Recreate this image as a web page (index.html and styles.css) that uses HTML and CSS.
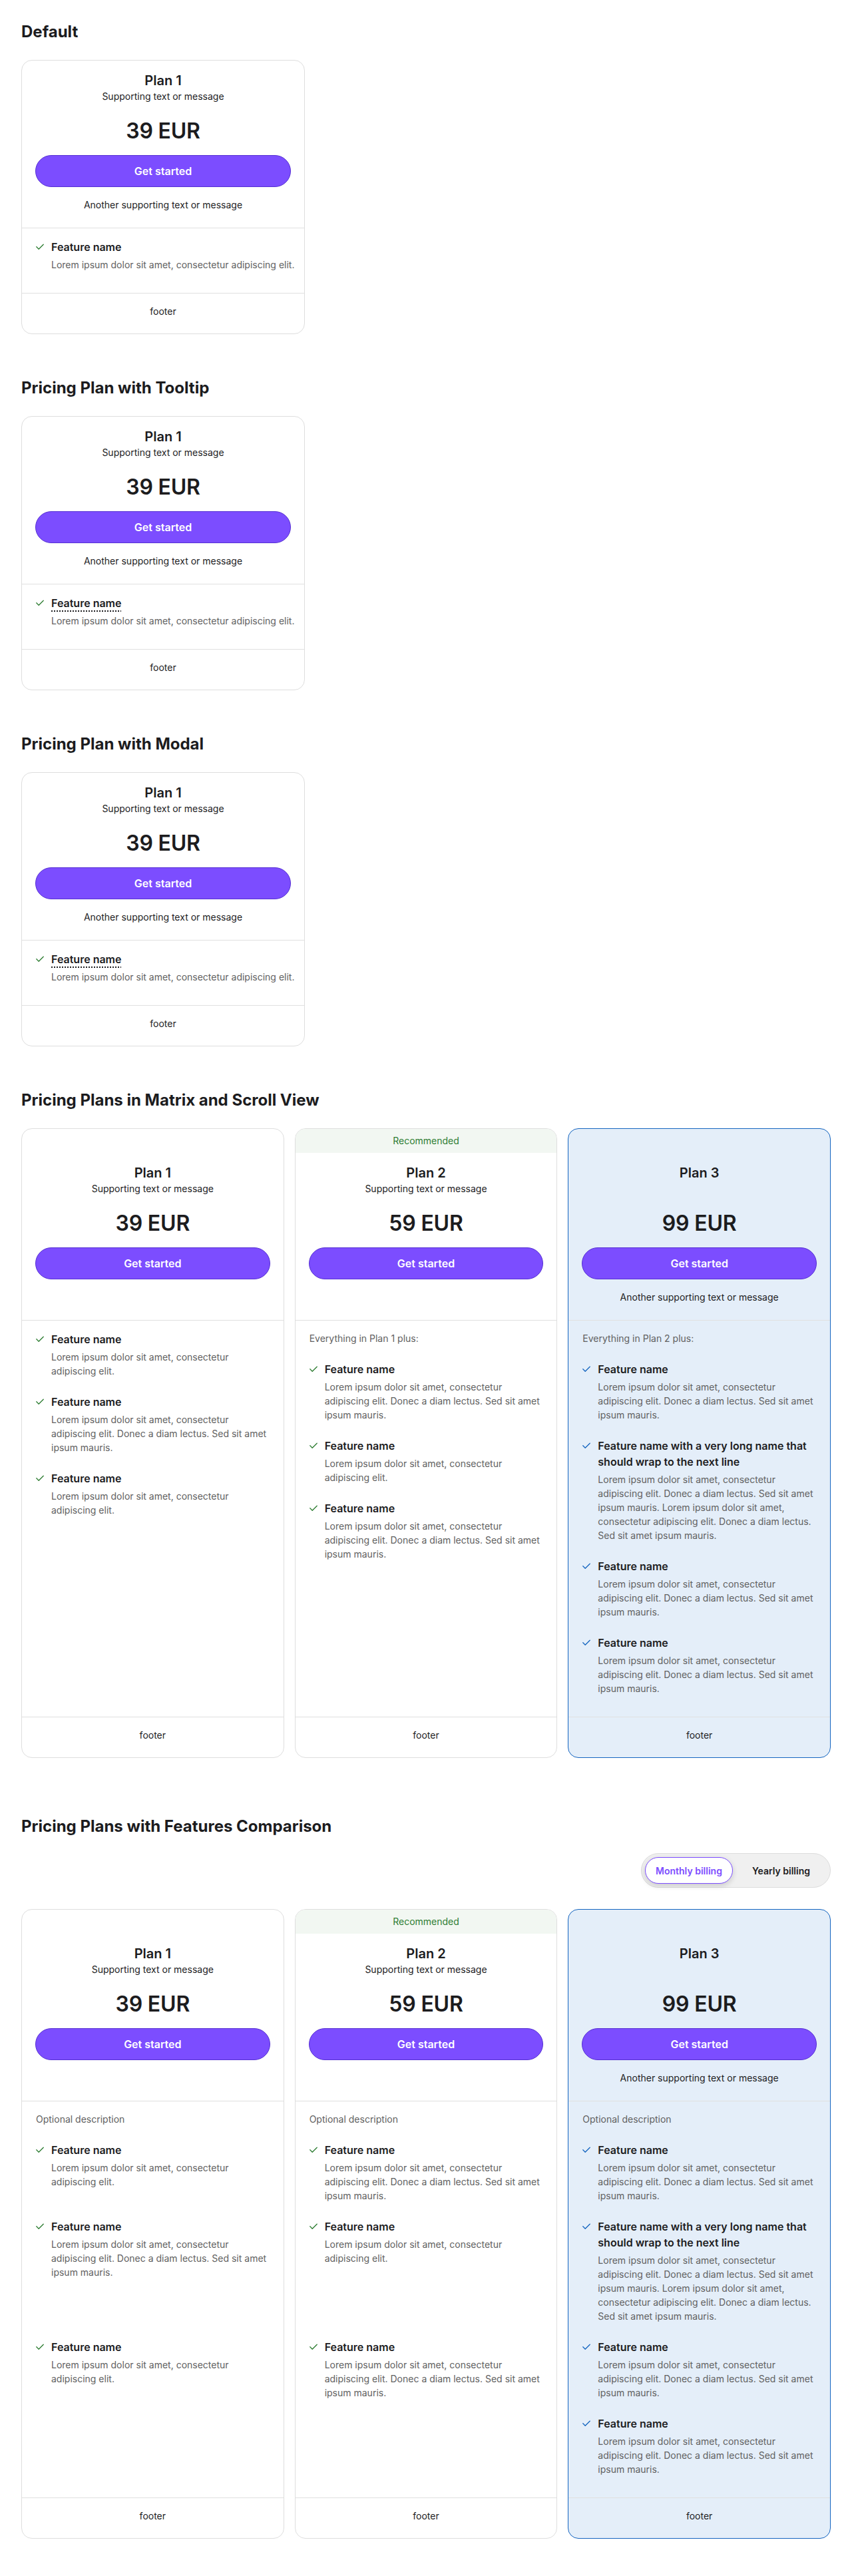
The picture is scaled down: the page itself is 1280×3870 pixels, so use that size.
FILE: index.html
```html
<!DOCTYPE html>
<html lang="en">
<head>
<meta charset="utf-8">
<title>Pricing plans</title>
<link rel="stylesheet" href="styles.css">
</head>
<body>
<main class="page">

  <section class="demo">
    <h2 class="demo-title">Default</h2>
    <article class="plan plan--single">
      <div class="plan-head">
        <h3 class="plan-name">Plan 1</h3>
        <p class="plan-sub">Supporting text or message</p>
        <p class="plan-price">39 EUR</p>
        <button class="plan-cta" type="button">Get started</button>
        <p class="plan-note">Another supporting text or message</p>
      </div>
      <ul class="plan-features">
        <li class="feature">
          <svg class="feature-check" viewBox="0 0 12 10" aria-hidden="true"><path d="M0.8 4.8 L4.2 8.2 L11.2 1.2"/></svg>
          <span class="feature-name">Feature name</span>
          <span class="feature-desc">Lorem ipsum dolor sit amet, consectetur adipiscing elit.</span>
        </li>
      </ul>
      <div class="plan-foot">footer</div>
    </article>
  </section>

  <section class="demo">
    <h2 class="demo-title">Pricing Plan with Tooltip</h2>
    <article class="plan plan--single">
      <div class="plan-head">
        <h3 class="plan-name">Plan 1</h3>
        <p class="plan-sub">Supporting text or message</p>
        <p class="plan-price">39 EUR</p>
        <button class="plan-cta" type="button">Get started</button>
        <p class="plan-note">Another supporting text or message</p>
      </div>
      <ul class="plan-features">
        <li class="feature">
          <svg class="feature-check" viewBox="0 0 12 10" aria-hidden="true"><path d="M0.8 4.8 L4.2 8.2 L11.2 1.2"/></svg>
          <span class="feature-name"><span class="feature-tip">Feature name</span></span>
          <span class="feature-desc">Lorem ipsum dolor sit amet, consectetur adipiscing elit.</span>
        </li>
      </ul>
      <div class="plan-foot">footer</div>
    </article>
  </section>

  <section class="demo">
    <h2 class="demo-title">Pricing Plan with Modal</h2>
    <article class="plan plan--single">
      <div class="plan-head">
        <h3 class="plan-name">Plan 1</h3>
        <p class="plan-sub">Supporting text or message</p>
        <p class="plan-price">39 EUR</p>
        <button class="plan-cta" type="button">Get started</button>
        <p class="plan-note">Another supporting text or message</p>
      </div>
      <ul class="plan-features">
        <li class="feature">
          <svg class="feature-check" viewBox="0 0 12 10" aria-hidden="true"><path d="M0.8 4.8 L4.2 8.2 L11.2 1.2"/></svg>
          <span class="feature-name"><span class="feature-tip">Feature name</span></span>
          <span class="feature-desc">Lorem ipsum dolor sit amet, consectetur adipiscing elit.</span>
        </li>
      </ul>
      <div class="plan-foot">footer</div>
    </article>
  </section>

  <section class="demo">
    <h2 class="demo-title">Pricing Plans in Matrix and Scroll View</h2>
    <div class="plans-grid plans-grid--scroll">
      <article class="plan">
        <div class="plan-band plan-band--empty"></div>
        <div class="plan-head">
          <h3 class="plan-name">Plan 1</h3>
          <p class="plan-sub">Supporting text or message</p>
          <p class="plan-price">39 EUR</p>
          <button class="plan-cta" type="button">Get started</button>
          <div class="plan-note plan-note--empty"></div>
        </div>
        <ul class="plan-features">
          <li class="feature">
            <svg class="feature-check" viewBox="0 0 12 10" aria-hidden="true"><path d="M0.8 4.8 L4.2 8.2 L11.2 1.2"/></svg>
            <span class="feature-name">Feature name</span>
            <span class="feature-desc">Lorem ipsum dolor sit amet, consectetur adipiscing elit.</span>
          </li>
          <li class="feature">
            <svg class="feature-check" viewBox="0 0 12 10" aria-hidden="true"><path d="M0.8 4.8 L4.2 8.2 L11.2 1.2"/></svg>
            <span class="feature-name">Feature name</span>
            <span class="feature-desc">Lorem ipsum dolor sit amet, consectetur adipiscing elit. Donec a diam lectus. Sed sit amet ipsum mauris.</span>
          </li>
          <li class="feature">
            <svg class="feature-check" viewBox="0 0 12 10" aria-hidden="true"><path d="M0.8 4.8 L4.2 8.2 L11.2 1.2"/></svg>
            <span class="feature-name">Feature name</span>
            <span class="feature-desc">Lorem ipsum dolor sit amet, consectetur adipiscing elit.</span>
          </li>
        </ul>
        <div class="plan-foot">footer</div>
      </article>

      <article class="plan">
        <div class="plan-band">Recommended</div>
        <div class="plan-head">
          <h3 class="plan-name">Plan 2</h3>
          <p class="plan-sub">Supporting text or message</p>
          <p class="plan-price">59 EUR</p>
          <button class="plan-cta" type="button">Get started</button>
          <div class="plan-note plan-note--empty"></div>
        </div>
        <ul class="plan-features">
          <li class="features-intro">Everything in Plan 1 plus:</li>
          <li class="feature">
            <svg class="feature-check" viewBox="0 0 12 10" aria-hidden="true"><path d="M0.8 4.8 L4.2 8.2 L11.2 1.2"/></svg>
            <span class="feature-name">Feature name</span>
            <span class="feature-desc">Lorem ipsum dolor sit amet, consectetur adipiscing elit. Donec a diam lectus. Sed sit amet ipsum mauris.</span>
          </li>
          <li class="feature">
            <svg class="feature-check" viewBox="0 0 12 10" aria-hidden="true"><path d="M0.8 4.8 L4.2 8.2 L11.2 1.2"/></svg>
            <span class="feature-name">Feature name</span>
            <span class="feature-desc">Lorem ipsum dolor sit amet, consectetur adipiscing elit.</span>
          </li>
          <li class="feature">
            <svg class="feature-check" viewBox="0 0 12 10" aria-hidden="true"><path d="M0.8 4.8 L4.2 8.2 L11.2 1.2"/></svg>
            <span class="feature-name">Feature name</span>
            <span class="feature-desc">Lorem ipsum dolor sit amet, consectetur adipiscing elit. Donec a diam lectus. Sed sit amet ipsum mauris.</span>
          </li>
        </ul>
        <div class="plan-foot">footer</div>
      </article>

      <article class="plan plan--featured">
        <div class="plan-band plan-band--empty"></div>
        <div class="plan-head">
          <h3 class="plan-name">Plan 3</h3>
          <div class="plan-sub plan-sub--empty"></div>
          <p class="plan-price">99 EUR</p>
          <button class="plan-cta" type="button">Get started</button>
          <p class="plan-note">Another supporting text or message</p>
        </div>
        <ul class="plan-features">
          <li class="features-intro">Everything in Plan 2 plus:</li>
          <li class="feature">
            <svg class="feature-check" viewBox="0 0 12 10" aria-hidden="true"><path d="M0.8 4.8 L4.2 8.2 L11.2 1.2"/></svg>
            <span class="feature-name">Feature name</span>
            <span class="feature-desc">Lorem ipsum dolor sit amet, consectetur adipiscing elit. Donec a diam lectus. Sed sit amet ipsum mauris.</span>
          </li>
          <li class="feature">
            <svg class="feature-check" viewBox="0 0 12 10" aria-hidden="true"><path d="M0.8 4.8 L4.2 8.2 L11.2 1.2"/></svg>
            <span class="feature-name">Feature name with a very long name that should wrap to the next line</span>
            <span class="feature-desc">Lorem ipsum dolor sit amet, consectetur adipiscing elit. Donec a diam lectus. Sed sit amet ipsum mauris. Lorem ipsum dolor sit amet, consectetur adipiscing elit. Donec a diam lectus. Sed sit amet ipsum mauris.</span>
          </li>
          <li class="feature">
            <svg class="feature-check" viewBox="0 0 12 10" aria-hidden="true"><path d="M0.8 4.8 L4.2 8.2 L11.2 1.2"/></svg>
            <span class="feature-name">Feature name</span>
            <span class="feature-desc">Lorem ipsum dolor sit amet, consectetur adipiscing elit. Donec a diam lectus. Sed sit amet ipsum mauris.</span>
          </li>
          <li class="feature">
            <svg class="feature-check" viewBox="0 0 12 10" aria-hidden="true"><path d="M0.8 4.8 L4.2 8.2 L11.2 1.2"/></svg>
            <span class="feature-name">Feature name</span>
            <span class="feature-desc">Lorem ipsum dolor sit amet, consectetur adipiscing elit. Donec a diam lectus. Sed sit amet ipsum mauris.</span>
          </li>
        </ul>
        <div class="plan-foot">footer</div>
      </article>
    </div>
  </section>

  <section class="demo">
    <h2 class="demo-title">Pricing Plans with Features Comparison</h2>
    <div class="billing-row">
      <div class="billing-toggle" role="group">
        <button class="billing-option billing-option--active" type="button">Monthly billing</button>
        <button class="billing-option" type="button">Yearly billing</button>
      </div>
    </div>
    <div class="plans-grid compare-grid">
      <article class="plan compare-card">
        <div class="plan-band plan-band--empty"></div>
        <div class="plan-head">
          <h3 class="plan-name">Plan 1</h3>
          <p class="plan-sub">Supporting text or message</p>
          <p class="plan-price">39 EUR</p>
          <button class="plan-cta" type="button">Get started</button>
          <div class="plan-note plan-note--empty"></div>
        </div>
        <p class="compare-intro">Optional description</p>
        <ul class="compare-list">
          <li class="feature compare-feature">
            <svg class="feature-check" viewBox="0 0 12 10" aria-hidden="true"><path d="M0.8 4.8 L4.2 8.2 L11.2 1.2"/></svg>
            <span class="feature-name">Feature name</span>
            <span class="feature-desc">Lorem ipsum dolor sit amet, consectetur adipiscing elit.</span>
          </li>
          <li class="feature compare-feature">
            <svg class="feature-check" viewBox="0 0 12 10" aria-hidden="true"><path d="M0.8 4.8 L4.2 8.2 L11.2 1.2"/></svg>
            <span class="feature-name">Feature name</span>
            <span class="feature-desc">Lorem ipsum dolor sit amet, consectetur adipiscing elit. Donec a diam lectus. Sed sit amet ipsum mauris.</span>
          </li>
          <li class="feature compare-feature">
            <svg class="feature-check" viewBox="0 0 12 10" aria-hidden="true"><path d="M0.8 4.8 L4.2 8.2 L11.2 1.2"/></svg>
            <span class="feature-name">Feature name</span>
            <span class="feature-desc">Lorem ipsum dolor sit amet, consectetur adipiscing elit.</span>
          </li>
        </ul>
        <div class="plan-foot compare-foot">footer</div>
      </article>

      <article class="plan compare-card">
        <div class="plan-band">Recommended</div>
        <div class="plan-head">
          <h3 class="plan-name">Plan 2</h3>
          <p class="plan-sub">Supporting text or message</p>
          <p class="plan-price">59 EUR</p>
          <button class="plan-cta" type="button">Get started</button>
          <div class="plan-note plan-note--empty"></div>
        </div>
        <p class="compare-intro">Optional description</p>
        <ul class="compare-list">
          <li class="feature compare-feature">
            <svg class="feature-check" viewBox="0 0 12 10" aria-hidden="true"><path d="M0.8 4.8 L4.2 8.2 L11.2 1.2"/></svg>
            <span class="feature-name">Feature name</span>
            <span class="feature-desc">Lorem ipsum dolor sit amet, consectetur adipiscing elit. Donec a diam lectus. Sed sit amet ipsum mauris.</span>
          </li>
          <li class="feature compare-feature">
            <svg class="feature-check" viewBox="0 0 12 10" aria-hidden="true"><path d="M0.8 4.8 L4.2 8.2 L11.2 1.2"/></svg>
            <span class="feature-name">Feature name</span>
            <span class="feature-desc">Lorem ipsum dolor sit amet, consectetur adipiscing elit.</span>
          </li>
          <li class="feature compare-feature">
            <svg class="feature-check" viewBox="0 0 12 10" aria-hidden="true"><path d="M0.8 4.8 L4.2 8.2 L11.2 1.2"/></svg>
            <span class="feature-name">Feature name</span>
            <span class="feature-desc">Lorem ipsum dolor sit amet, consectetur adipiscing elit. Donec a diam lectus. Sed sit amet ipsum mauris.</span>
          </li>
        </ul>
        <div class="plan-foot compare-foot">footer</div>
      </article>

      <article class="plan plan--featured compare-card">
        <div class="plan-band plan-band--empty"></div>
        <div class="plan-head">
          <h3 class="plan-name">Plan 3</h3>
          <div class="plan-sub plan-sub--empty"></div>
          <p class="plan-price">99 EUR</p>
          <button class="plan-cta" type="button">Get started</button>
          <p class="plan-note">Another supporting text or message</p>
        </div>
        <p class="compare-intro">Optional description</p>
        <ul class="compare-list">
          <li class="feature compare-feature">
            <svg class="feature-check" viewBox="0 0 12 10" aria-hidden="true"><path d="M0.8 4.8 L4.2 8.2 L11.2 1.2"/></svg>
            <span class="feature-name">Feature name</span>
            <span class="feature-desc">Lorem ipsum dolor sit amet, consectetur adipiscing elit. Donec a diam lectus. Sed sit amet ipsum mauris.</span>
          </li>
          <li class="feature compare-feature">
            <svg class="feature-check" viewBox="0 0 12 10" aria-hidden="true"><path d="M0.8 4.8 L4.2 8.2 L11.2 1.2"/></svg>
            <span class="feature-name">Feature name with a very long name that should wrap to the next line</span>
            <span class="feature-desc">Lorem ipsum dolor sit amet, consectetur adipiscing elit. Donec a diam lectus. Sed sit amet ipsum mauris. Lorem ipsum dolor sit amet, consectetur adipiscing elit. Donec a diam lectus. Sed sit amet ipsum mauris.</span>
          </li>
          <li class="feature compare-feature">
            <svg class="feature-check" viewBox="0 0 12 10" aria-hidden="true"><path d="M0.8 4.8 L4.2 8.2 L11.2 1.2"/></svg>
            <span class="feature-name">Feature name</span>
            <span class="feature-desc">Lorem ipsum dolor sit amet, consectetur adipiscing elit. Donec a diam lectus. Sed sit amet ipsum mauris.</span>
          </li>
          <li class="feature compare-feature">
            <svg class="feature-check" viewBox="0 0 12 10" aria-hidden="true"><path d="M0.8 4.8 L4.2 8.2 L11.2 1.2"/></svg>
            <span class="feature-name">Feature name</span>
            <span class="feature-desc">Lorem ipsum dolor sit amet, consectetur adipiscing elit. Donec a diam lectus. Sed sit amet ipsum mauris.</span>
          </li>
        </ul>
        <div class="plan-foot compare-foot">footer</div>
      </article>
    </div>
  </section>

</main>
</body>
</html>
```

FILE: styles.css
```css
* { box-sizing: border-box; }

html, body { margin: 0; padding: 0; background: #ffffff; }

body {
  font-family: Inter, "Noto Sans", "Liberation Sans", sans-serif;
  color: #1c1c1e;
  -webkit-font-smoothing: antialiased;
}

.page {
  display: flex;
  flex-direction: column;
  gap: 63px;
  padding: 30px 32px 53px;
}

.demo-title {
  margin: 0 0 24px;
  font-size: 24px;
  line-height: 36px;
  font-weight: 700;
  color: #1c1c1e;
}

/* ---------- card ---------- */
.plan {
  display: flex;
  flex-direction: column;
  background: #ffffff;
  border: 1px solid #dedede;
  border-radius: 16px;
  overflow: hidden;
}

.plan--single { width: 426px; }

.plan--featured {
  background: #e4eef9;
  border-color: #1565c0;
}

.plan-band {
  height: 36px;
  line-height: 36px;
  text-align: center;
  font-size: 14px;
  color: #2e7d32;
  background: #f2f7f2;
}

.plan-band--empty { background: transparent; }

.plan-head {
  display: flex;
  flex-direction: column;
  align-items: stretch;
  text-align: center;
  padding: 16px 20px 23px;
}

.plan-name {
  margin: 0;
  font-size: 20px;
  line-height: 28px;
  font-weight: 600;
}

.plan-sub {
  margin: 0;
  font-size: 14px;
  line-height: 20px;
}

.plan-sub--empty { height: 20px; }

.plan-price {
  margin: 22px 0 0;
  font-size: 32px;
  line-height: 40px;
  font-weight: 600;
  letter-spacing: -0.2px;
}

.plan-cta {
  margin-top: 16px;
  height: 48px;
  width: 100%;
  border: 1px solid #5530d2;
  border-radius: 24px;
  background: #7c4dff;
  color: #ffffff;
  font-family: inherit;
  font-size: 16px;
  font-weight: 600;
  cursor: pointer;
}

.plan-note {
  margin: 16px 0 0;
  font-size: 14px;
  line-height: 22px;
}

.plan-note--empty { height: 22px; }

/* ---------- features ---------- */
.plan-features {
  flex: 1;
  list-style: none;
  margin: 0;
  padding: 16px 20px 8px 21px;
  border-top: 1px solid #e0e0e0;
}

.plan--single .plan-features { padding-right: 8px; }

.features-intro {
  margin-bottom: 24px;
  font-size: 14px;
  line-height: 21px;
  color: #616161;
}

.feature {
  display: grid;
  grid-template-columns: 12px 1fr;
  column-gap: 11px;
  margin-bottom: 24px;
}

.feature-check {
  grid-column: 1;
  grid-row: 1;
  width: 12px;
  height: 10px;
  margin-top: 7px;
  fill: none;
  stroke: #2e7d32;
  stroke-width: 1.3;
  stroke-linecap: round;
  stroke-linejoin: round;
}

.plan--featured .feature-check { stroke: #1565c0; }

.feature-name {
  grid-column: 2;
  grid-row: 1;
  font-size: 16px;
  line-height: 24px;
  font-weight: 600;
}

.feature-tip {
  text-decoration: underline dotted 2px;
  text-underline-offset: 5px;
}

.feature-desc {
  grid-column: 2;
  grid-row: 2;
  margin-top: 4px;
  font-size: 14px;
  line-height: 21px;
  color: #616161;
}

.plan-foot {
  border-top: 1px solid #e0e0e0;
  padding: 16px 20px 22px;
  text-align: center;
  font-size: 14px;
  line-height: 22px;
}

/* ---------- grids ---------- */
.plans-grid {
  display: grid;
  grid-template-columns: repeat(3, minmax(0, 1fr));
  column-gap: 16px;
}

.plans-grid--scroll {
  padding-bottom: 22px;
}

/* ---------- billing toggle ---------- */
.billing-row {
  display: flex;
  justify-content: flex-end;
  margin: -2px 0 32px;
}

.billing-toggle {
  display: flex;
  gap: 4px;
  padding: 5px;
  background: #f0f0f0;
  border: 1px solid #dcdcdc;
  border-radius: 26px;
}

.billing-option {
  height: 40px;
  padding: 0 24px;
  border: 1px solid transparent;
  border-radius: 20px;
  background: transparent;
  color: #1c1c1e;
  font-family: inherit;
  font-size: 14px;
  font-weight: 600;
  cursor: pointer;
}

.billing-option--active {
  padding: 0 15px;
  background: #ffffff;
  border-color: #7c4dff;
  color: #7c4dff;
  box-shadow: 0 3px 8px rgba(0, 0, 0, 0.16);
}

/* ---------- comparison (rows aligned across cards) ---------- */
.compare-grid {
  grid-template-rows: repeat(8, auto);
}

.compare-card {
  display: grid;
  grid-row: span 8;
  grid-template-rows: subgrid;
  row-gap: 0;
}

.compare-list { display: contents; }

.compare-intro {
  margin: 0;
  padding: 16px 20px 24px 21px;
  border-top: 1px solid #e0e0e0;
  font-size: 14px;
  line-height: 21px;
  color: #616161;
}

.compare-feature {
  margin: 0;
  padding: 0 20px 24px 21px;
  align-content: start;
}

.compare-foot {
  grid-row: 8;
  margin-top: 8px;
}
```
